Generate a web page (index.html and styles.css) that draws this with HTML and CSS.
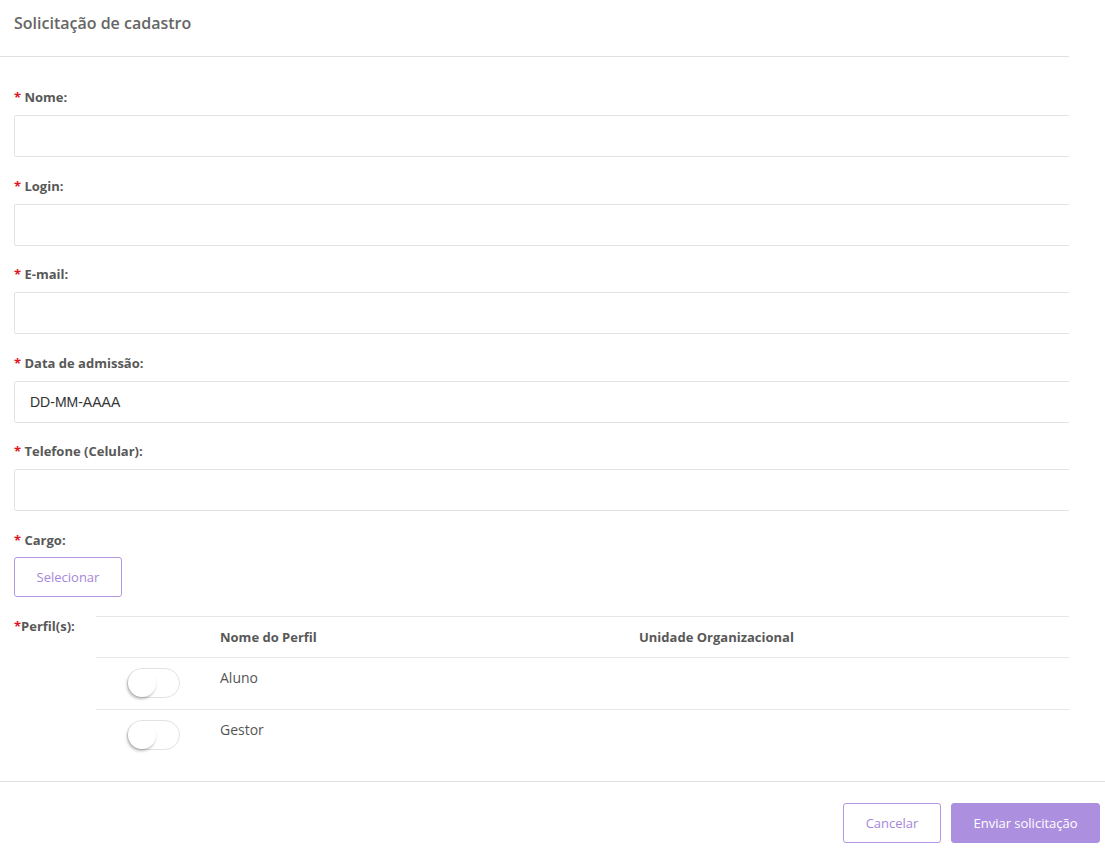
FILE: index.html
```html
<!DOCTYPE html>
<html lang="pt-BR">
<head>
    <meta charset="UTF-8">
    <title>Solicitação de cadastro</title>
    <link rel="stylesheet" href="styles.css">
</head>
<body>
    <div class="modal">
        <div class="modal-header">
            <h1 class="modal-title">Solicitação de cadastro</h1>
        </div>

        <div class="modal-body">
            <div class="field">
                <label class="field-label"><span class="req">*</span> Nome:</label>
                <input class="field-input" type="text">
            </div>
            <div class="field">
                <label class="field-label"><span class="req">*</span> Login:</label>
                <input class="field-input" type="text">
            </div>
            <div class="field">
                <label class="field-label"><span class="req">*</span> E-mail:</label>
                <input class="field-input" type="text">
            </div>
            <div class="field">
                <label class="field-label"><span class="req">*</span> Data de admissão:</label>
                <input class="field-input" type="text" value="DD-MM-AAAA">
            </div>
            <div class="field">
                <label class="field-label"><span class="req">*</span> Telefone (Celular):</label>
                <input class="field-input" type="text">
            </div>
            <div class="field">
                <label class="field-label"><span class="req">*</span> Cargo:</label>
                <button class="btn btn-outline btn-select">Selecionar</button>
            </div>

            <div class="profiles">
                <div class="field-label profiles-label"><span class="req">*</span>Perfil(s):</div>
                <div class="profiles-table">
                    <div class="table-row table-head">
                        <div class="cell"></div>
                        <div class="cell">Nome do Perfil</div>
                        <div class="cell">Unidade Organizacional</div>
                    </div>
                    <div class="table-row">
                        <div class="cell"><span class="toggle"><span class="knob"></span></span></div>
                        <div class="cell cell-text">Aluno</div>
                        <div class="cell"></div>
                    </div>
                    <div class="table-row">
                        <div class="cell"><span class="toggle"><span class="knob"></span></span></div>
                        <div class="cell cell-text">Gestor</div>
                        <div class="cell"></div>
                    </div>
                </div>
            </div>
        </div>

        <div class="modal-footer">
            <button class="btn btn-outline btn-cancel">Cancelar</button>
            <button class="btn btn-primary">Enviar solicitação</button>
        </div>
    </div>
</body>
</html>
```

FILE: styles.css
```css
body {
    margin: 0;
    font-family: "Open Sans", sans-serif;
    color: #555;
    background-color: #fff;
}

.modal {
    width: 1105px;
}

.modal-header {
    width: 1069px;
    height: 57px;
    box-sizing: border-box;
    padding: 0 14px;
    display: flex;
    align-items: center;
    border-bottom: 1px solid #e0e0e0;
}

.modal-title {
    margin: 0 0 10px;
    font-size: 16px;
    font-weight: 600;
    color: #666;
}

.modal-body {
    width: 1069px;
    box-sizing: border-box;
    padding: 30px 0 19px 14px;
    overflow: hidden;
}

.field {
    margin-bottom: 18.5px;
}

.field-label {
    display: block;
    height: 20px;
    line-height: 20px;
    margin-bottom: 8px;
    font-size: 13px;
    font-weight: 700;
    color: #585858;
}

.req {
    color: #e0141e;
}

.field-input {
    display: block;
    width: 1080px;
    height: 42px;
    box-sizing: border-box;
    margin: 0;
    padding: 0 15px;
    border: 1px solid #e3e3e3;
    border-radius: 2px;
    font-family: "Liberation Sans", Arial, sans-serif;
    font-size: 14px;
    color: #333;
    outline: none;
}

.btn {
    height: 40px;
    box-sizing: border-box;
    border-radius: 3px;
    font-family: "Open Sans", sans-serif;
    font-size: 13px;
    cursor: pointer;
}

.btn-outline {
    background-color: #fff;
    border: 1px solid #b497e4;
    color: #a587da;
}

.btn-select {
    width: 108px;
    margin-top: -1px;
}

.btn-primary {
    width: 149px;
    background-color: #ad8fe0;
    border: 1px solid #ad8fe0;
    color: #fff;
}

.profiles {
    display: flex;
    padding-top: 1px;
}

.profiles-label {
    width: 82px;
    flex-shrink: 0;
}

.profiles-table {
    flex: 1;
    border-top: 1px solid #e6e6e6;
}

.table-row {
    display: grid;
    grid-template-columns: 124px 419px 1fr;
    height: 52px;
    box-sizing: border-box;
    border-bottom: 1px solid #e6e6e6;
}

.table-row:last-child {
    border-bottom: none;
}

.table-head {
    height: 41px;
    font-size: 13px;
    font-weight: 700;
    color: #585858;
}

.table-head .cell {
    display: flex;
    align-items: center;
}

.cell-text {
    padding-top: 10px;
    font-size: 14px;
    line-height: 20px;
    color: #555;
}

.toggle {
    display: block;
    position: relative;
    width: 53px;
    height: 30px;
    box-sizing: border-box;
    margin: 10px 0 0 31px;
    border: 1px solid #e2e2e2;
    border-radius: 15px;
    background-color: #fff;
}

.knob {
    position: absolute;
    top: 0;
    left: 0;
    width: 28px;
    height: 28px;
    border-radius: 50%;
    background-color: #fff;
    box-shadow: -1px 2px 3px rgba(0, 0, 0, 0.28);
}

.modal-footer {
    border-top: 1px solid #e0e0e0;
    padding: 21px 5px 0 0;
    display: flex;
    justify-content: flex-end;
    gap: 10px;
}

.btn-cancel {
    width: 98px;
}
```
